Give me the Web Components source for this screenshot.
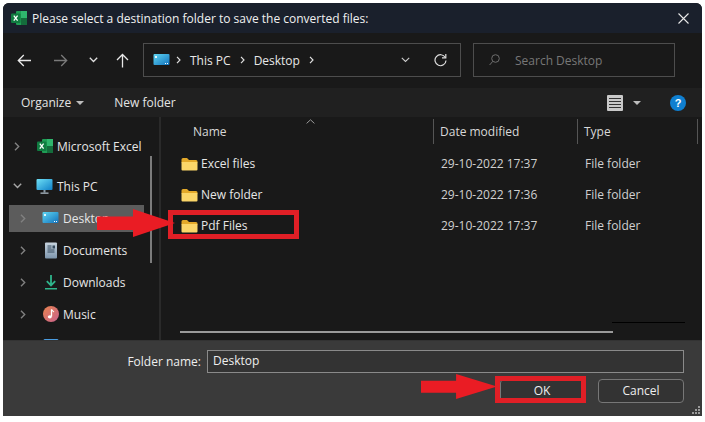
<!DOCTYPE html>
<html>
<head>
<meta charset="utf-8">
<style>
html, body { margin: 0; background: #fff; }
body { width: 705px; height: 422px; overflow: hidden; font: 12px "Open Sans", sans-serif; color: #e6e6e6; position: relative; }
</style>
</head>
<body>
<save-dialog>
  <dlg-titlebar>Please select a destination folder to save the converted files:</dlg-titlebar>
  <dlg-nav></dlg-nav>
  <dlg-toolbar></dlg-toolbar>
  <div slot="main" style="display:flex;height:223px">
    <nav-pane>
      <tree-item top="13" chev="right" icon="excel" indent="0">Microsoft Excel</tree-item>
      <tree-item top="8" chev="down" icon="pc" indent="0">This PC</tree-item>
      <tree-item chev="right" icon="desktop" indent="1" selected>Desktop</tree-item>
      <tree-item chev="right" icon="docs" indent="1">Documents</tree-item>
      <tree-item chev="right" icon="down" indent="1">Downloads</tree-item>
      <tree-item chev="right" icon="music" indent="1">Music</tree-item>
      <tree-item chev="right" icon="pics" indent="1"></tree-item>
    </nav-pane>
    <file-list>
      <file-row date="29-10-2022 17:37" type="File folder">Excel files</file-row>
      <file-row date="29-10-2022 17:36" type="File folder">New folder</file-row>
      <file-row date="29-10-2022 17:37" type="File folder">Pdf Files</file-row>
    </file-list>
  </div>
  <dlg-footer slot="footer"></dlg-footer>
</save-dialog>
<red-box style="left:168px;top:210px;width:131px;height:29px"></red-box>
<red-box style="left:495px;top:376px;width:91px;height:27px"></red-box>
<red-arrow style="left:97px;top:209px;width:78px;height:28px"></red-arrow>
<red-arrow style="left:421px;top:374px;width:76px;height:25px"></red-arrow>

<script>
const icons = {
  excel: `<svg width="16" height="16" viewBox="0 0 16 16"><rect x="5" y="1" width="11" height="14" rx="1" fill="#1f9d55"/><rect x="10" y="1" width="6" height="7" fill="#2fb56d"/><rect x="10" y="8" width="6" height="7" fill="#146c3c"/><rect x="0" y="3.500" width="9.500" height="9.500" rx="1" fill="#107c41"/><path d="M2.800 5.700l3.800 5M6.600 5.700l-3.800 5" stroke="#fff" stroke-width="1.300"/></svg>`,
  pc: `<svg width="17" height="17" viewBox="0 0 17 17"><defs><linearGradient id="p" x1="0" y1="0" x2="1" y2="1"><stop offset="0" stop-color="#6fe0f5"/><stop offset="1" stop-color="#0f80c8"/></linearGradient></defs><rect x="0.500" y="1" width="16" height="11" rx="1" fill="url(#p)"/><rect x="7.500" y="12" width="2" height="2.500" fill="#8a99a6"/><rect x="4.500" y="14.500" width="8" height="1.300" fill="#aab7c2"/></svg>`,
  desktop: `<svg width="17" height="14" viewBox="0 0 17 14"><defs><linearGradient id="d" x1="0" y1="0" x2="1" y2="1"><stop offset="0" stop-color="#5fd6f2"/><stop offset="1" stop-color="#1272bd"/></linearGradient></defs><rect x="0.500" y="1" width="16" height="11" rx="1" fill="url(#d)"/><rect x="2" y="3" width="2" height="2" fill="#dff6fc"/><rect x="12" y="10" width="1" height="1" fill="#fff"/><rect x="14" y="10" width="1" height="1" fill="#fff"/></svg>`,
  docs: `<svg width="14" height="17" viewBox="0 0 14 17"><defs><linearGradient id="o" x1="0" y1="0" x2="0" y2="1"><stop offset="0" stop-color="#c7d3de"/><stop offset="1" stop-color="#7d96ad"/></linearGradient></defs><rect x="1" y="0.500" width="12" height="16" rx="1" fill="url(#o)"/><path d="M3.500 4h4M3.500 6h4M3.500 8h7M3.500 10h7" stroke="#33485c" stroke-width="1"/><rect x="8.500" y="3.500" width="2.500" height="3" fill="#33485c"/></svg>`,
  down: `<svg width="14" height="17" viewBox="0 0 14 17"><path d="M7 1v10M2.800 7.200L7 11.400l4.200-4.200" fill="none" stroke="#2fb58c" stroke-width="1.800"/><rect x="1" y="14" width="12" height="1.500" fill="#2fb58c"/></svg>`,
  music: `<svg width="16" height="16" viewBox="0 0 16 16"><defs><linearGradient id="m" x1="0" y1="0" x2="1" y2="1"><stop offset="0" stop-color="#e8834e"/><stop offset="1" stop-color="#c9628e"/></linearGradient></defs><circle cx="8" cy="8" r="8" fill="url(#m)"/><path d="M8.500 3.500v7" stroke="#fff" stroke-width="1.300"/><path d="M8.500 3.500c.6 1.400 1.800 1.800 2.500 2.500" fill="none" stroke="#fff" stroke-width="1.100"/><ellipse cx="6.800" cy="10.800" rx="2" ry="1.600" fill="#fff"/></svg>`,
  pics: `<svg width="16" height="16" viewBox="0 0 16 16"><rect x="0.500" y="1" width="15" height="14" rx="1.500" fill="#4a9ce0"/></svg>`
};
const folderSvg = `<svg width="17" height="14" viewBox="0 0 17 14"><path d="M0.500 2.500a1.500 1.500 0 0 1 1.500-1.500h4l2 2h7a1.500 1.500 0 0 1 1.500 1.500v1H.5z" fill="#e3a92a"/><path d="M.5 5h16v7.500a1 1 0 0 1-1 1H1.500a1 1 0 0 1-1-1z" fill="#fbd669"/></svg>`;

class SaveDialog extends HTMLElement {
  constructor() {
    super();
    this.attachShadow({ mode: 'open' });
  }
  connectedCallback() {
    this.shadowRoot.innerHTML = `
    <style>
      :host { display: block; margin: 3px 3px 0 3px; width: 699px; height: 413px; background: #191919; border-radius: 6px 6px 0 0; overflow: hidden; }
      .ticks { display: none; }
    </style>
    <slot></slot><slot name="main"></slot><slot name="footer"></slot>`;
  }
}

class DlgTitlebar extends HTMLElement {
  constructor() {
    super();
    this.attachShadow({ mode: 'open' });
  }
  connectedCallback() {
    this.shadowRoot.innerHTML = `
    <style>
      :host { display: flex; align-items: center; height: 30px; background: #1a202c; padding: 0 13px 0 8px; color: #f0f0f0; font-size: 12px; }
      .t { margin-left: 5px; flex: 1; padding-top: 1px; }
      svg { display: block; }
    </style>
    ${icons.excel}<span class="t"><slot></slot></span>
    <svg width="11" height="11" viewBox="0 0 11 11"><path d="M.5.500l10 10M10.500.500l-10 10" stroke="#e8e8e8" stroke-width="1.100"/></svg>`;
  }
}

class DlgNav extends HTMLElement {
  constructor() {
    super();
    this.attachShadow({ mode: 'open' });
  }
  connectedCallback() {
    this.shadowRoot.innerHTML = `
    <style>
      :host { display: flex; align-items: center; height: 55px; background: #191919; box-sizing: border-box; padding: 0 14px 1px 14px; color: #e8e8e8; }
      svg { display: block; flex: none; }
      .btns { display: flex; align-items: center; width: 126px; }
      .path { display: flex; align-items: center; box-sizing: border-box; width: 318px; height: 34px; border: 1px solid #4d4d4d; padding: 0 13px 0 9px; margin-left: 0; }
      .crumb { margin: 0 9px 0 9px; }
      .sep { margin: 0; }
      .spacer { flex: 1; }
      .search { display: flex; align-items: center; box-sizing: border-box; width: 202px; height: 34px; margin-left: 12px; border: 1px solid #4d4d4d; padding-left: 15px; color: #777; }
      .search span { margin-left: 15px; }
    </style>
    <div class="btns">
      <svg width="15" height="13" viewBox="0 0 15 13"><path d="M14 6.500H1.500M6.800 1L1.300 6.500 6.800 12" fill="none" stroke="#e8e8e8" stroke-width="1.300"/></svg>
      <svg style="margin-left:21px" width="15" height="13" viewBox="0 0 15 13"><path d="M1 6.500h12.500M8.200 1l5.500 5.500L8.200 12" fill="none" stroke="#7a7a7a" stroke-width="1.300"/></svg>
      <svg style="margin-left:21px" width="9" height="6" viewBox="0 0 9 6"><path d="M.8.800l3.700 3.700L8.200.8" fill="none" stroke="#e0e0e0" stroke-width="1.300"/></svg>
      <svg style="margin-left:18px" width="13" height="15" viewBox="0 0 13 15"><path d="M6.500 14.500V1.500M1 7L6.500 1.500 12 7" fill="none" stroke="#e8e8e8" stroke-width="1.300"/></svg>
    </div>
    <div class="path">
      ${icons.desktop}
      <svg style="margin-left:6px" class="sep" width="5" height="8" viewBox="0 0 5 8"><path d="M1 .800L4 4 1 7.200" fill="none" stroke="#ddd" stroke-width="1.200"/></svg>
      <span class="crumb">This PC</span>
      <svg class="sep" width="5" height="8" viewBox="0 0 5 8"><path d="M1 .800L4 4 1 7.200" fill="none" stroke="#ddd" stroke-width="1.200"/></svg>
      <span class="crumb">Desktop</span>
      <svg class="sep" width="5" height="8" viewBox="0 0 5 8"><path d="M1 .800L4 4 1 7.200" fill="none" stroke="#ddd" stroke-width="1.200"/></svg>
      <span class="spacer"></span>
      <svg width="9" height="6" viewBox="0 0 9 6"><path d="M.8.800l3.700 3.700L8.200.8" fill="none" stroke="#ccc" stroke-width="1.100"/></svg>
      <svg style="margin-left:24px" width="13" height="13" viewBox="0 0 13 13"><path d="M11.300 3.500A5.500 5.500 0 1 0 12 6.500" fill="none" stroke="#ddd" stroke-width="1.200"/><path d="M8 3.800h3.800V0" fill="none" stroke="#ddd" stroke-width="1.200"/></svg>
    </div>
    <div class="search">
      <svg width="11" height="12" viewBox="0 0 11 12"><circle cx="6.500" cy="4.500" r="3.800" fill="none" stroke="#6e6e6e" stroke-width="1"/><path d="M3.800 7.300L.6 11" stroke="#6e6e6e" stroke-width="1"/></svg>
      <span>Search Desktop</span>
    </div>`;
  }
}

class DlgToolbar extends HTMLElement {
  constructor() {
    super();
    this.attachShadow({ mode: 'open' });
  }
  connectedCallback() {
    this.shadowRoot.innerHTML = `
    <style>
      :host { display: flex; align-items: center; height: 29px; background: #202020; padding: 0 16px 0 18px; color: #e4e4e4; }
      .caret { width: 0; height: 0; border: 4px solid transparent; border-top: 4px solid #bdbdbd; border-bottom: 0; margin-left: 5px; }
      .spacer { flex: 1; }
      svg { display: block; }
      .nf { margin-left: 30px; }
    </style>
    <span>Organize</span><span class="caret"></span><span class="nf">New folder</span><span class="spacer"></span>
    <svg width="16" height="16" viewBox="0 0 16 16"><rect width="16" height="16" rx="1" fill="#c9c9c9"/><path d="M2 3.500h12M2 6.500h12M2 9.500h12M2 12.500h12" stroke="#333" stroke-width="1"/></svg>
    <span class="caret" style="margin:0 0 0 10px"></span>
    <svg style="margin-left:29px" width="16" height="16" viewBox="0 0 16 16"><circle cx="8" cy="8" r="8" fill="#0f7fd0"/></svg>`;
    const help = this.shadowRoot.lastElementChild;
    help.insertAdjacentHTML('beforeend', '<text x="8" y="12" font-family="Liberation Sans" font-weight="bold" font-size="11" fill="#fff" text-anchor="middle">?</text>');
  }
}

class NavPane extends HTMLElement {
  constructor() {
    super();
    this.attachShadow({ mode: 'open' });
  }
  connectedCallback() {
    this.shadowRoot.innerHTML = `
    <style>
      :host { display: block; position: relative; flex: none; width: 158px; height: 223px; overflow: hidden; box-sizing: border-box; border-right: 2px solid #2a2a2a; background: #191919; }
      .thumb { position: absolute; left: 147px; top: 39px; width: 2px; height: 107px; background: #7c7c7c; }
    </style>
    <slot></slot><div class="thumb"></div>`;
  }
}

class TreeItem extends HTMLElement {
  constructor() {
    super();
    this.attachShadow({ mode: 'open' });
  }
  connectedCallback() {
    const indent = this.getAttribute('indent') === '1';
    const chev = this.getAttribute('chev') === 'down'
      ? `<svg width="9" height="6" viewBox="0 0 9 6"><path d="M.8.800l3.700 3.700L8.200.8" fill="none" stroke="#a8a8a8" stroke-width="1.400"/></svg>`
      : `<svg width="6" height="9" viewBox="0 0 6 9"><path d="M1 .8l3.700 3.700L1 8.200" fill="none" stroke="#808080" stroke-width="1.400"/></svg>`;
    this.shadowRoot.innerHTML = `
    <style>
      :host { display: flex; align-items: center; box-sizing: border-box; height: 32px; margin-top: ${this.getAttribute('top') || 0}px; padding-left: ${indent ? 3 : 0}px; color: #e6e6e6; white-space: nowrap; }
      .sel { display: flex; align-items: center; width: 135px; height: 27px; margin-left: 3px; background: ${this.hasAttribute('selected') ? '#5c5c5c' : 'transparent'}; }
      .c { width: ${indent ? 26 : 22}px; display: flex; justify-content: center; padding-left: ${indent ? 2 : 0}px; box-sizing: border-box; flex: none; }
      .i { width: 17px; height: 17px; display: flex; align-items: center; justify-content: center; flex: none; margin-left: ${indent ? 7 : 8}px; margin-right: 4px; }
      svg { display: block; }
    </style>
    <div class="sel"><span class="c">${chev}</span><span class="i">${icons[this.getAttribute('icon')]}</span><slot></slot></div>`;
  }
}

class FileList extends HTMLElement {
  constructor() {
    super();
    this.attachShadow({ mode: 'open' });
  }
  connectedCallback() {
    this.shadowRoot.innerHTML = `
    <style>
      :host { display: block; position: relative; flex: 1; height: 223px; background: #191919; overflow: hidden; }
      .head { display: grid; grid-template-columns: 273px 144px 120px; height: 28px; align-items: center; background: #191919; color: #d8d8d8; position: relative; }
      .head span { height: 25px; line-height: 25px; padding-left: 6px; border-right: 1px solid #555; box-sizing: border-box; }
      .head span:first-child { padding-left: 32px; }
      .sort { position: absolute; left: 145px; top: 2px; }
      .rows { display: block; padding-top: 3px; }
      .hbar { position: absolute; left: 19px; top: 214px; width: 433px; height: 2px; background: #9a9a9a; }
      .line { position: absolute; left: 451px; top: 205px; width: 73px; height: 1px; background: #000; }
    </style>
    <div class="head"><span>Name</span><span>Date modified</span><span>Type</span>
      <svg class="sort" width="9" height="5" viewBox="0 0 9 5"><path d="M.6 4.400L4.500.8l3.900 3.600" fill="none" stroke="#999" stroke-width="1"/></svg>
    </div>
    <div class="rows"><slot></slot></div>
    <div class="hbar"></div><div class="line"></div>`;
  }
}

class FileRow extends HTMLElement {
  constructor() {
    super();
    this.attachShadow({ mode: 'open' });
  }
  connectedCallback() {
    this.shadowRoot.innerHTML = `
    <style>
      :host { display: grid; grid-template-columns: 273px 144px 120px; height: 31px; align-items: center; color: #e6e6e6; }
      .n { display: flex; align-items: center; padding-left: 20px; }
      .n svg { display: block; margin-right: 3px; }
      .d { padding-left: 7px; color: #d0d0d0; }
    </style>
    <div class="n">${folderSvg}<slot></slot></div>
    <div class="d">${this.getAttribute('date')}</div><div class="d">${this.getAttribute('type')}</div>`;
  }
}

class DlgFooter extends HTMLElement {
  constructor() {
    super();
    this.attachShadow({ mode: 'open' });
  }
  connectedCallback() {
    this.shadowRoot.innerHTML = `
    <style>
      :host { display: block; position: relative; box-sizing: border-box; height: 76px; background: #3a3a3a; border-top: 1px solid #333; padding: 9px 18px 0 0; color: #eee; }
      .fld { display: flex; align-items: center; justify-content: flex-end; }
      .fld span { margin-right: 6px; }
      .input { box-sizing: border-box; width: 477px; height: 23px; line-height: 20px; padding-left: 5px; border: 1px solid #8a8a8a; background: #333; }
      .btns { display: flex; justify-content: flex-end; margin-top: 6px; }
      .btn { box-sizing: border-box; height: 24px; line-height: 22px; text-align: center; border: 1px solid #777; border-radius: 4px; background: #333; }
      .ok { width: 84px; margin-right: 14px; }
      .cancel { width: 86px; }
      svg { position: absolute; right: 1px; bottom: 1px; }
    </style>
    <div class="fld"><span>Folder name:</span><div class="input">Desktop</div></div>
    <div class="btns"><div class="btn ok">OK</div><div class="btn cancel">Cancel</div></div>
    <svg width="9" height="9" viewBox="0 0 9 9" fill="#9a9a9a"><rect x="6" y="0" width="2" height="2"/><rect x="3" y="3" width="2" height="2"/><rect x="6" y="3" width="2" height="2"/><rect x="0" y="6" width="2" height="2"/><rect x="3" y="6" width="2" height="2"/><rect x="6" y="6" width="2" height="2"/></svg>`;
  }
}

class RedBox extends HTMLElement {
  constructor() {
    super();
    this.attachShadow({ mode: 'open' });
  }
  connectedCallback() {
    this.shadowRoot.innerHTML = `<style>:host { display: block; position: absolute; box-sizing: border-box; border: 5px solid #e11f26; }</style>`;
  }
}

class RedArrow extends HTMLElement {
  constructor() {
    super();
    this.attachShadow({ mode: 'open' });
  }
  connectedCallback() {
    this.shadowRoot.innerHTML = `
    <style>:host { display: block; position: absolute; } svg { display: block; width: 100%; height: 100%; }</style>
    <svg viewBox="0 0 78 28" preserveAspectRatio="none"><path d="M0 7.500L36 7.500 36 0 78 14 36 28 36 21 0 21z" fill="#ea1c24"/></svg>`;
  }
}

customElements.define('save-dialog', SaveDialog);
customElements.define('dlg-titlebar', DlgTitlebar);
customElements.define('dlg-nav', DlgNav);
customElements.define('dlg-toolbar', DlgToolbar);
customElements.define('nav-pane', NavPane);
customElements.define('tree-item', TreeItem);
customElements.define('file-list', FileList);
customElements.define('file-row', FileRow);
customElements.define('dlg-footer', DlgFooter);
customElements.define('red-box', RedBox);
customElements.define('red-arrow', RedArrow);
</script>
</body>
</html>
